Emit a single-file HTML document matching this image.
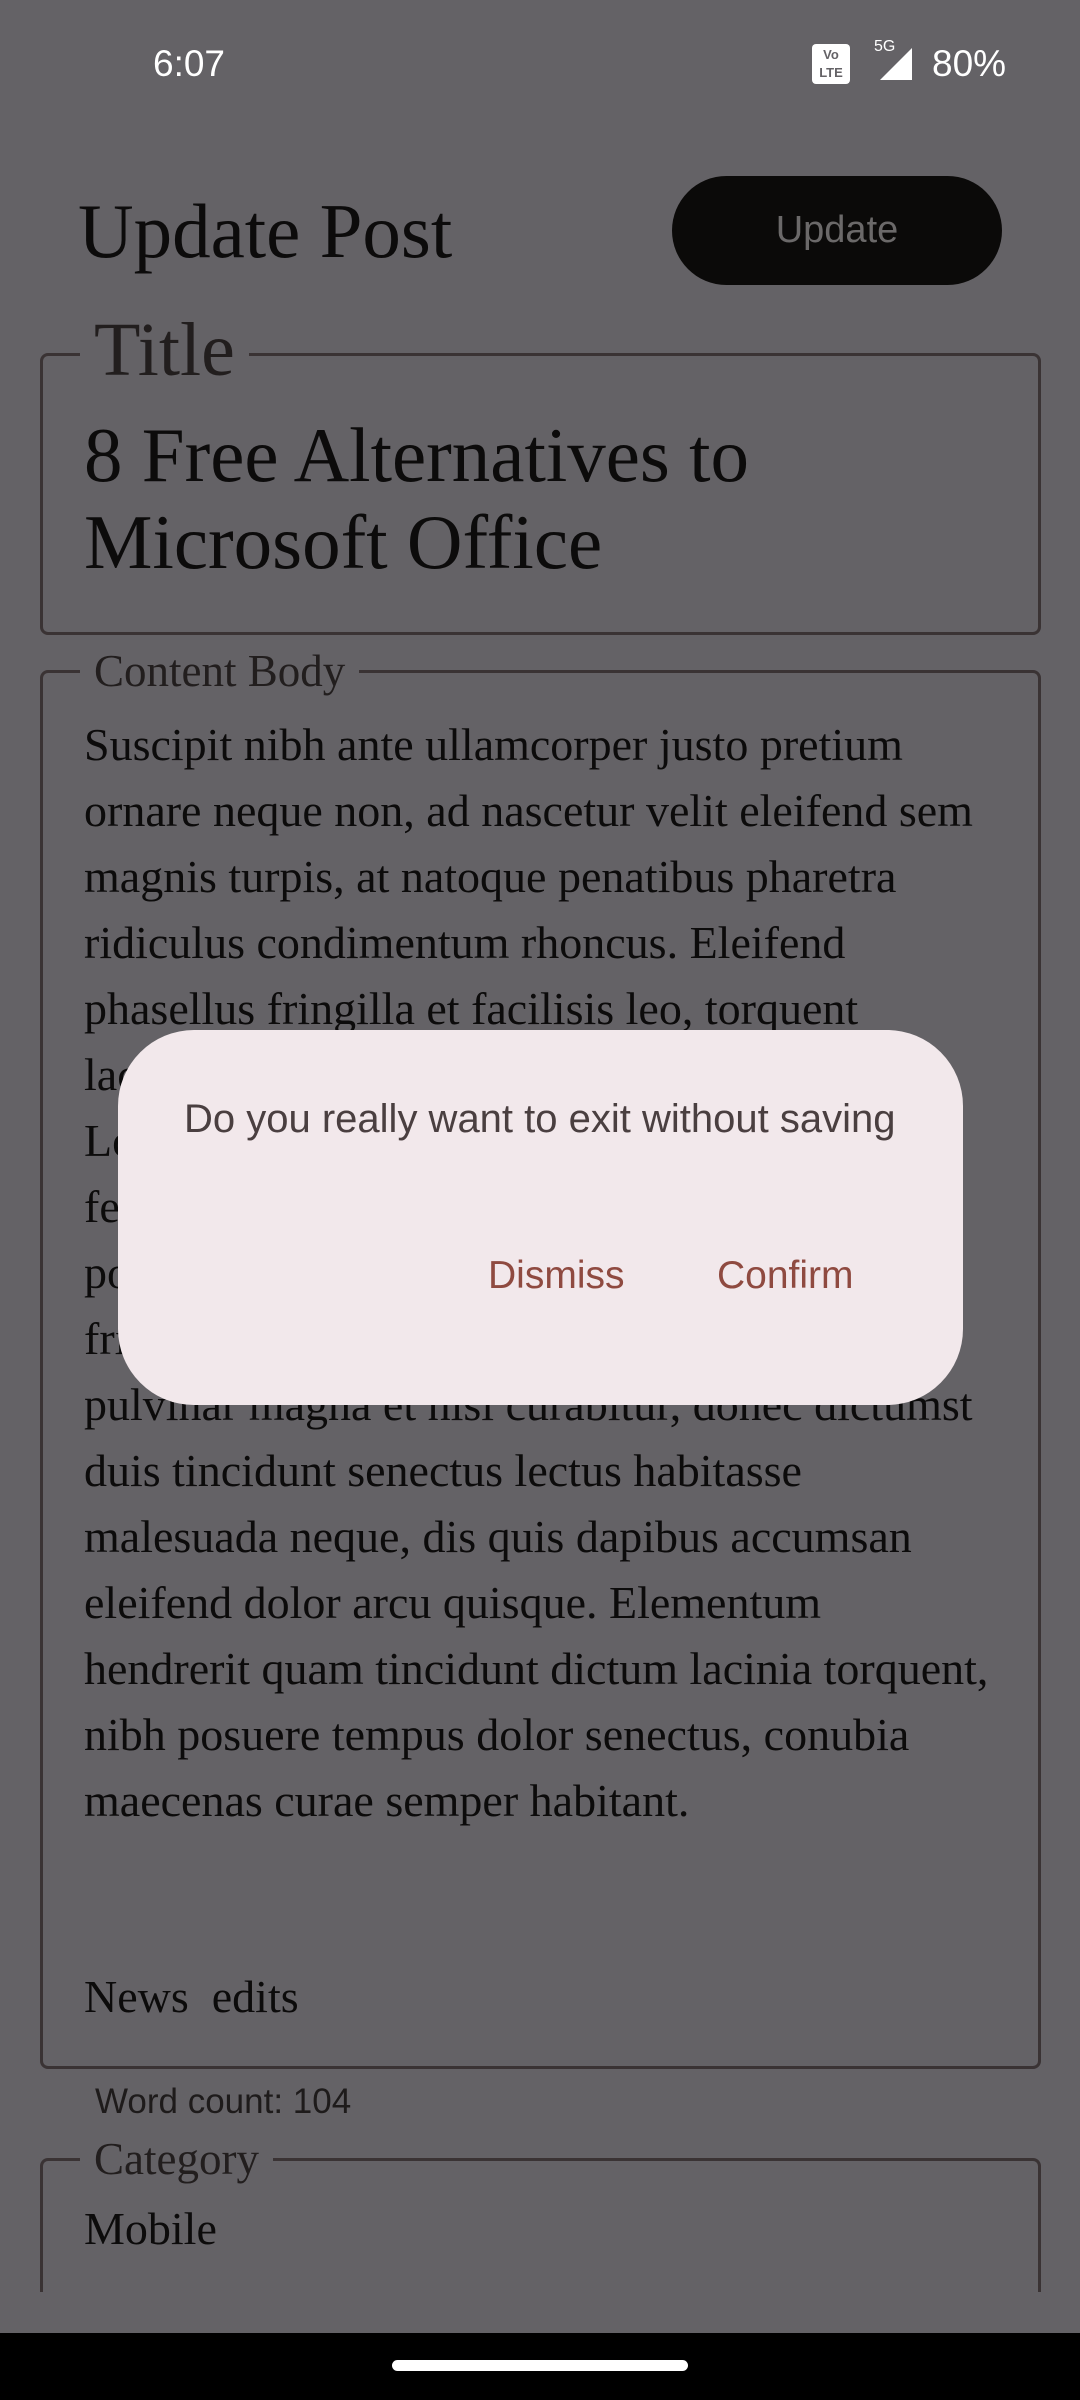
<!DOCTYPE html>
<html><head><meta charset="utf-8"><style>
*{margin:0;padding:0;box-sizing:border-box}
body{width:1080px;height:2400px;background:#646266;position:relative;overflow:hidden;font-family:"Liberation Serif",serif;color:#0c0b0b}
.a{position:absolute;white-space:nowrap}
.sans{font-family:"Liberation Sans",sans-serif}
.box{position:absolute;border:3px solid #3a3334;border-radius:8px}
.lbl{position:absolute;background:#646266;padding:0 14px;white-space:nowrap;color:#221e1e}
.body div{height:66px;line-height:66px;font-size:46px;white-space:nowrap}
</style></head><body>
<div class="a sans" style="left:153px;top:42px;font-size:37px;color:#fff;line-height:44px">6:07</div>
<div class="a" style="left:812px;top:44px;width:38px;height:40px;background:#fff;border-radius:4px;font:bold 13px 'Liberation Sans',sans-serif;color:#646266;text-align:center;line-height:18px;padding-top:2px">Vo<br>LTE</div>
<div class="a sans" style="left:874px;top:38px;font-size:16px;color:#fff">5G</div>
<svg class="a" style="left:878px;top:46px" width="36" height="36"><path d="M34 2V34H2Z" fill="#fff"/></svg>
<div class="a sans" style="left:932px;top:42px;font-size:37px;color:#fff;line-height:44px">80%</div>

<div class="a" style="left:78px;top:186px;font-size:77px;line-height:90px">Update Post</div>
<div class="a sans" style="left:672px;top:176px;width:330px;height:109px;border-radius:55px;background:#0b0a09;color:#6b6969;font-size:38px;line-height:109px;text-align:center">Update</div>

<div class="box" style="left:40px;top:353px;width:1001px;height:282px"></div>
<div class="lbl" style="left:80px;top:305px;font-size:76px;line-height:90px">Title</div>
<div class="a" style="left:84px;top:412px;font-size:77px;line-height:87px">8 Free Alternatives to<br>Microsoft Office</div>

<div class="box" style="left:40px;top:670px;width:1001px;height:1399px"></div>
<div class="lbl" style="left:80px;top:645px;font-size:45px;line-height:52px">Content Body</div>
<div class="a body" style="left:84px;top:712px">
<div>Suscipit nibh ante ullamcorper justo pretium</div>
<div>ornare neque non, ad nascetur velit eleifend sem</div>
<div>magnis turpis, at natoque penatibus pharetra</div>
<div>ridiculus condimentum rhoncus. Eleifend</div>
<div>phasellus fringilla et facilisis leo, torquent</div>
<div>lacinia ut magna nunc. Integer posuere rutrum</div>
<div>Lorem vitae aliquet semper, dictum mauris sed</div>
<div>felis nostra montes vehicula, lectus tincidunt</div>
<div>porta viverra nulla, sagittis convallis mauris</div>
<div>fringilla ultrices elit purus, ligula placerat</div>
<div>pulvinar magna et nisi curabitur, donec dictumst</div>
<div>duis tincidunt senectus lectus habitasse</div>
<div>malesuada neque, dis quis dapibus accumsan</div>
<div>eleifend dolor arcu quisque. Elementum</div>
<div>hendrerit quam tincidunt dictum lacinia torquent,</div>
<div>nibh posuere tempus dolor senectus, conubia</div>
<div>maecenas curae semper habitant.</div>
</div>
<div class="a" style="left:84px;top:1964px;font-size:46px;line-height:66px">News&nbsp;&nbsp;edits</div>
<div class="a sans" style="left:95px;top:2082px;font-size:35px;line-height:40px;color:#1e1b1b">Word count: 104</div>

<div class="a" style="left:40px;top:2158px;width:1001px;height:134px;border:3px solid #3a3334;border-bottom:none;border-radius:8px 8px 0 0"></div>
<div class="lbl" style="left:80px;top:2133px;font-size:45px;line-height:52px">Category</div>
<div class="a" style="left:84px;top:2196px;font-size:46px;line-height:66px">Mobile</div>

<div class="a" style="left:0;top:2333px;width:1080px;height:67px;background:#000"></div>
<div class="a" style="left:392px;top:2360px;width:296px;height:11px;border-radius:6px;background:#fff"></div>

<div class="a" style="left:118px;top:1030px;width:845px;height:375px;background:#f2e8eb;border-radius:76px"></div>
<div class="a sans" style="left:184px;top:1096px;font-size:40px;line-height:46px;color:#4a3f40">Do you really want to exit without saving</div>
<div class="a sans" style="left:488px;top:1254px;font-size:39px;line-height:44px;color:#8f4a40">Dismiss</div>
<div class="a sans" style="left:717px;top:1254px;font-size:39px;line-height:44px;color:#8f4a40">Confirm</div>
</body></html>
